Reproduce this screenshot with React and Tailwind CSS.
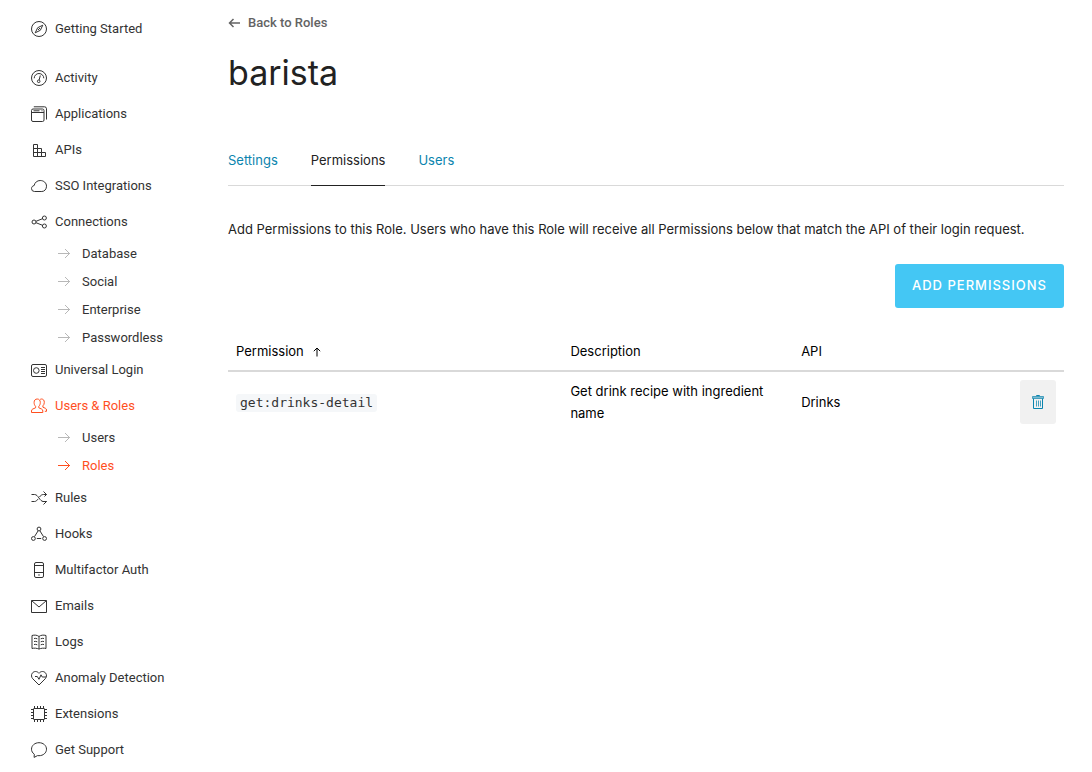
import React from "react";

const icons = {
  start: (
    <>
      <circle cx="8" cy="8" r="7.5" />
      <path d="M11.8 4.2 9.3 9.3 4.2 11.8 6.7 6.7ZM7 9l2-2" />
    </>
  ),
  activity: (
    <>
      <circle cx="8" cy="8" r="7.5" />
      <path d="M3.2 8.3A4.8 4.8 0 0 1 12.8 8.3M9.3 5.5 8.1 10" />
      <circle cx="7.7" cy="11.3" r="1.3" />
    </>
  ),
  apps: (
    <>
      <rect x="0.5" y="3" width="12.5" height="12.5" rx="1.5" />
      <path d="M.5 6.5H13M2.5 4.8h6M10.5 4.8h1M2.8.8H13.5a2 2 0 0 1 2 2V13.5" />
    </>
  ),
  apis: <path d="M2.5 2.5h4v4h4v4h4v4h-12ZM2.5 6.5h4v8M2.5 10.5h8v4" />,
  cloud: <path d="M3.5 13.5A3 3 0 0 1 .5 10.6C.5 9 1.6 7.8 3.1 7.6 3.8 4.4 6.2 2.5 9.2 2.5c3.5 0 6.3 2.4 6.3 5.7 0 3-2 5.3-4.7 5.3Z" />,
  connections: (
    <>
      <circle cx="3" cy="8" r="2" />
      <circle cx="13.4" cy="4" r="2" />
      <circle cx="13.4" cy="12" r="2" />
      <path d="m5 7.3 6.5-2.6M5 8.7l6.5 2.6" />
    </>
  ),
  login: (
    <>
      <rect x="0.5" y="2.5" width="15" height="12" rx="1.5" />
      <circle cx="5.3" cy="8.5" r="2.8" />
      <path d="M10 5.5h4M10 7.5h4M10 9.5h4M10 11.5h4" />
    </>
  ),
  users: (
    <>
      <path d="M6.2 1C4.2 1 3.1 2.4 3.1 4.5c0 1.7.6 3 1.5 3.8v1.5L1.8 11C.9 11.4.5 12 .5 13v1.5h11.3V13c0-1-.4-1.6-1.3-2L7.8 9.8V8.3c.9-.8 1.5-2.1 1.5-3.8C9.3 2.4 8.2 1 6.2 1Z" />
      <path d="M9.2 1.3C9.6 1.1 10 1 10.4 1c1.9 0 2.9 1.3 2.9 3.3 0 1.5-.5 2.8-1.4 3.5v1.4l2.5 1.1c.8.4 1.1.9 1.1 1.700v1.300h-1.700" />
    </>
  ),
  rules: <path d="M.5 4.5h3c4 0 5 7 9 7h3M.5 11.5h3c1.6 0 2.7-1.2 3.6-2.6M8.5 7c1-1.5 2.2-2.5 4-2.5h3M12.5 1.5l3 3-2 2M11.5 11.5h4L12.5 14.5" />,
  hooks: (
    <>
      <circle cx="8" cy="3" r="1.9" />
      <circle cx="2.4" cy="12.5" r="1.9" />
      <circle cx="13.6" cy="12.5" r="1.9" />
      <path d="M7 5 3.5 10.6M9 5l3.5 5.6M5.8 12.5h4.4" />
    </>
  ),
  phone: (
    <>
      <rect x="3.5" y="0.5" width="9" height="15" rx="1.5" />
      <path d="M3.5 3.5h9M3.5 10.5h9M7.2 13h1.6" />
    </>
  ),
  mail: <path d="M.5 2.5h15v12H.5ZM.7 2.7 8 9l7.3-6.3" />,
  logs: (
    <>
      <path d="M8 2.5C6.3 1 3.3.8 1 1.5v13c2-.6 5-.4 7 .6 2-1 5-1.2 7-.6v-13C12.7.8 9.7 1 8 2.5ZM8 2.5V15" />
      <path d="M3 4.5c1-.3 2.3-.2 3.3.3M3 7.5c1-.3 2.3-.2 3.3.3M3 10.5c1-.3 2.3-.2 3.3.3M13 4.5c-1-.3-2.3-.2-3.3.3M13 7.5c-1-.3-2.3-.2-3.3.3M13 10.5c-1-.3-2.3-.2-3.3.3" />
    </>
  ),
  heart: (
    <>
      <path d="M8 15 1.8 8.8C.3 7.3 0 4.7 1.4 3 3 1 6.2.9 8 3.3 9.8.9 13 1 14.6 3c1.4 1.7 1.1 4.3-.4 5.8Z" />
      <path d="M4 6.5h2.300L8 9.300 10 4.800l1.200 2.200h3.800" />
    </>
  ),
  chip: (
    <>
      <rect x="2.5" y="2.5" width="11" height="11" rx="0.5" />
      <path d="M3.5 2.5V0M6.5 2.5V0M9.5 2.5V0M12.5 2.5V0M3.5 16v-2.5M6.5 16v-2.5M9.5 16v-2.5M12.5 16v-2.5M0 3.5h2.5M0 6.5h2.5M0 9.5h2.5M0 12.5h2.5M13.5 3.5H16M13.5 6.5H16M13.5 9.5H16M13.5 12.5H16" />
    </>
  ),
  chat: <path d="M8 .7c4.2 0 7.5 2.8 7.5 6.5s-3.3 6.5-7.5 6.5c-.5 0-1 0-1.5-.1L3.1 15.4l.2-3.2C1.6 11 .5 9.2 .5 7.2.5 3.5 3.8.7 8 .7Z" />,
};

const nav = [
  { label: "Activity", icon: "activity" },
  { label: "Applications", icon: "apps" },
  { label: "APIs", icon: "apis" },
  { label: "SSO Integrations", icon: "cloud" },
  {
    label: "Connections",
    icon: "connections",
    children: ["Database", "Social", "Enterprise", "Passwordless"],
  },
  { label: "Universal Login", icon: "login" },
  { label: "Users & Roles", icon: "users", active: true, children: ["Users", "Roles"], current: "Roles" },
  { label: "Rules", icon: "rules" },
  { label: "Hooks", icon: "hooks" },
  { label: "Multifactor Auth", icon: "phone" },
  { label: "Emails", icon: "mail" },
  { label: "Logs", icon: "logs" },
  { label: "Anomaly Detection", icon: "heart" },
  { label: "Extensions", icon: "chip" },
  { label: "Get Support", icon: "chat" },
];

function NavLink({ label, icon, active }) {
  return (
    <a href="#" className={`flex h-9 items-center gap-2 ${active ? "text-[#ff4f1f]" : "text-[#333]"}`}>
      <svg className="size-4 shrink-0" viewBox="0 0 16 16" fill="none" stroke="currentColor" aria-hidden="true">
        {icons[icon]}
      </svg>
      <span>{label}</span>
    </a>
  );
}

function SubLink({ label, active }) {
  return (
    <a href="#" className={`flex h-7 items-center gap-3 ${active ? "text-[#ff4f1f]" : "text-[#333]"}`}>
      <svg
        className={`h-3 w-3 shrink-0 ${active ? "text-[#ff4f1f]" : "text-[#b8b8b8]"}`}
        viewBox="0 0 12 12"
        fill="none"
        stroke="currentColor"
        aria-hidden="true"
      >
        <path d="M0 5.5h12M7 1l4.5 4.5L7 10" />
      </svg>
      <span>{label}</span>
    </a>
  );
}

export default function App() {
  return (
    <div className="flex bg-white font-['Inter',sans-serif] text-[13px]">
      <aside className="w-[228px] shrink-0 pt-[11px] pl-[31px] font-['Roboto',sans-serif] text-[13px]">
        <nav aria-label="Main">
          <NavLink label="Getting Started" icon="start" />
          <ul className="mt-[13px]">
            {nav.map((item) => (
              <li key={item.label}>
                <NavLink {...item} />
                {item.children && (
                  <ul className="pl-[27px]">
                    {item.children.map((child) => (
                      <li key={child}>
                        <SubLink label={child} active={child === item.current} />
                      </li>
                    ))}
                  </ul>
                )}
              </li>
            ))}
          </ul>
        </nav>
      </aside>

      <main className="min-w-0 flex-1 pt-[13px] pr-7 text-black">
        <a href="#" className="inline-flex h-5 items-center gap-2 font-['Roboto',sans-serif] font-medium text-[#636363]">
          <svg className="size-3" viewBox="0 0 12 12" fill="none" stroke="currentColor" strokeWidth="1.5" aria-hidden="true">
            <path d="M12 6H1.5M5.5 2l-4 4 4 4" />
          </svg>
          Back to Roles
        </a>
        <h1 className="mt-[14px] text-[34px] leading-[48px] text-[#222]">barista</h1>

        <nav aria-label="Role" className="mt-[37px] flex gap-[33px] border-b border-[#d9d9d9] leading-5 text-[#0a84ae]">
          <a href="#" className="-mb-px pt-4 pb-[15px]">Settings</a>
          <a href="#" aria-current="page" className="-mb-px border-b border-[#222] pt-4 pb-[15px] text-[#222]">
            Permissions
          </a>
          <a href="#" className="-mb-px pt-4 pb-[15px]">Users</a>
        </nav>

        <p className="mt-8 leading-[22px] text-[#222]">
          Add Permissions to this Role. Users who have this Role will receive all Permissions below that match the API
          of their login request.
        </p>

        <div className="mt-6 flex justify-end">
          <button
            type="button"
            className="h-11 rounded-[3px] bg-[#44c7f4] px-[17px] font-medium tracking-[1px] text-white"
          >
            ADD PERMISSIONS
          </button>
        </div>

        <table className="mt-6 w-full table-fixed text-left leading-[22px]">
          <thead>
            <tr className="h-[39px] border-b-2 border-[#d9d9d9]">
              <th scope="col" className="w-[40%] px-2 font-normal">
                <button type="button" className="flex items-center gap-[9px]">
                  Permission
                  <svg className="h-3 w-2" viewBox="0 0 8 12" fill="none" stroke="currentColor" aria-hidden="true">
                    <path d="M4 11.5V3M.8 6.2 4 3l3.2 3.2" />
                  </svg>
                </button>
              </th>
              <th scope="col" className="w-[27.6%] px-2 font-normal">Description</th>
              <th scope="col" className="px-2 font-normal">API</th>
              <th scope="col" aria-label="Actions" className="w-[52px]" />
            </tr>
          </thead>
          <tbody>
            <tr>
              <td className="p-2">
                <code className="inline-block rounded-[3px] bg-[#f5f7f9] px-1 font-['DejaVu_Sans_Mono',monospace] leading-[18px] text-[#333]">
                  get:drinks-detail
                </code>
              </td>
              <td className="p-2">Get drink recipe with ingredient name</td>
              <td className="p-2">Drinks</td>
              <td className="p-2">
                <button
                  type="button"
                  aria-label="Remove permission"
                  className="flex h-11 w-9 items-center justify-center rounded-[3px] bg-[#f1f1f1] text-[#0a84ae]"
                >
                  <svg className="h-4 w-3" viewBox="0 0 12 16" fill="none" stroke="currentColor" aria-hidden="true">
                    <path d="M4.5 2V1.5h3V2" />
                    <path d="M.5 2.5h11v2H.5Z" fill="#0a84ae" fillOpacity=".5" strokeOpacity=".65" />
                    <path d="M1.5 4.5v10h9v-10" />
                    <path d="M4.5 6.5v6M6.5 6.5v6M8.5 6.5v6" strokeOpacity=".75" />
                  </svg>
                </button>
              </td>
            </tr>
          </tbody>
        </table>
      </main>
    </div>
  );
}
